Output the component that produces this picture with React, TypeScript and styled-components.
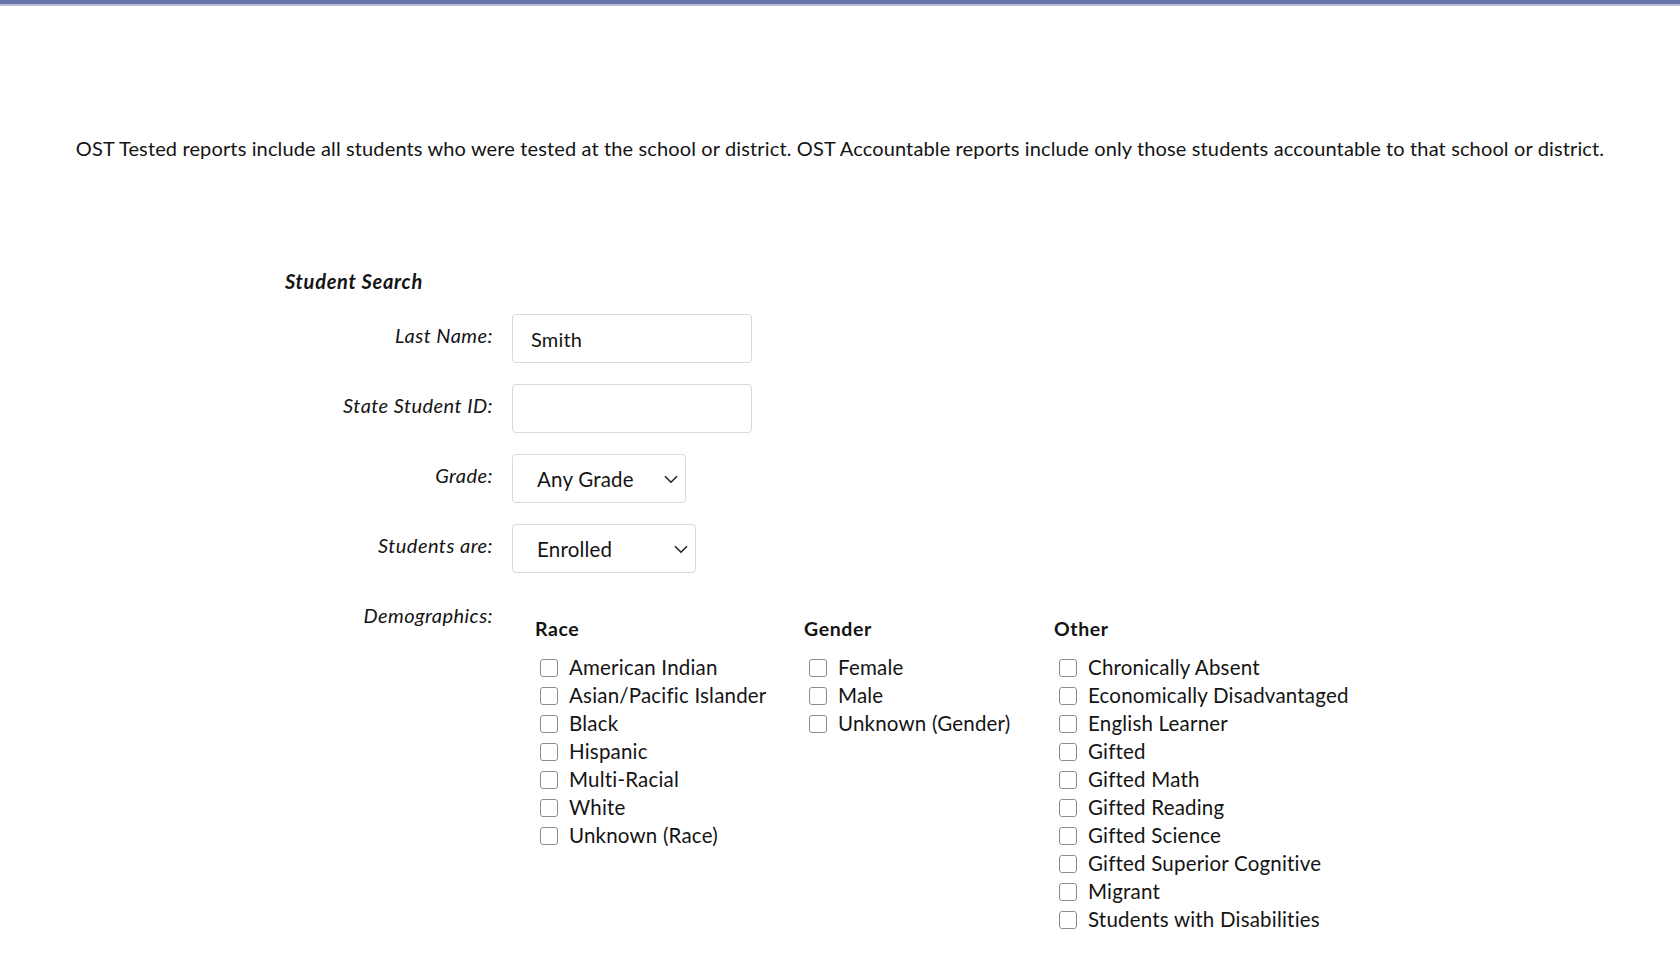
import React from "react";
import styled, { createGlobalStyle } from "styled-components";

const GlobalStyle = createGlobalStyle`
  html, body {
    margin: 0;
    padding: 0;
    background: #ffffff;
    color: #141414;
    font-family: Lato, "Open Sans", sans-serif;
  }
`;

const TopBar = styled.div`
  height: 4px;
  background: #6672a8;
  border-bottom: 2px solid #b7bedd;
`;

const Intro = styled.p`
  margin: 129px 0 0;
  text-align: center;
  font-size: 20px;
  letter-spacing: 0.13px;
  line-height: 26px;
`;

const SearchSection = styled.section`
  margin-top: 108px;
  padding-left: 285px;
`;

const Title = styled.h2`
  margin: 0 0 21px;
  font-size: 20px;
  letter-spacing: 0.7px;
  line-height: 24px;
  font-weight: 700;
  font-style: italic;
`;

const FormGrid = styled.div`
  display: grid;
  grid-template-columns: 208px auto;
  column-gap: 19px;
  row-gap: 21px;
  align-items: start;
`;

const Label = styled.label`
  text-align: right;
  font-style: italic;
  font-size: 20px;
  letter-spacing: 0.45px;
  line-height: 24px;
  padding-top: 9px;
`;

const TextInput = styled.input`
  box-sizing: border-box;
  width: 240px;
  height: 49px;
  border: 1px solid #d9d9d9;
  border-radius: 4px;
  padding: 0 18px;
  font-family: inherit;
  font-size: 20px;
  letter-spacing: 0.2px;
  color: #141414;
  outline: none;
`;

const SelectWrap = styled.div<{ $width: number }>`
  position: relative;
  width: ${(p) => p.$width}px;
  height: 49px;
`;

const Select = styled.select`
  box-sizing: border-box;
  appearance: none;
  width: 100%;
  height: 100%;
  border: 1px solid #d9d9d9;
  border-radius: 4px;
  padding: 0 24px;
  background: #fff;
  font-family: inherit;
  font-size: 20.5px;
  letter-spacing: 0.2px;
  color: #141414;
  outline: none;
`;

const Chevron = styled.svg`
  position: absolute;
  right: 8px;
  top: 21px;
  pointer-events: none;
`;

const Demographics = styled.div`
  display: flex;
  padding-left: 23px;
  padding-top: 24px;
`;

const Group = styled.div<{ $width?: number }>`
  width: ${(p) => (p.$width ? `${p.$width}px` : "auto")};
`;

const GroupTitle = styled.div`
  font-size: 19.5px;
  letter-spacing: 0.6px;
  font-weight: 700;
  line-height: 22px;
  margin-bottom: 13px;
`;

const Option = styled.label`
  display: flex;
  align-items: center;
  gap: 11px;
  height: 28px;
  padding-left: 5px;
  font-size: 20.5px;
  letter-spacing: 0.2px;
`;

const Box = styled.input`
  appearance: none;
  box-sizing: border-box;
  width: 18px;
  height: 18px;
  margin: 2px 0 0;
  border: 1px solid #8c8c8c;
  border-radius: 3px;
  background: #fff;
`;

const race = [
  "American Indian",
  "Asian/Pacific Islander",
  "Black",
  "Hispanic",
  "Multi-Racial",
  "White",
  "Unknown (Race)",
];
const gender = ["Female", "Male", "Unknown (Gender)"];
const other = [
  "Chronically Absent",
  "Economically Disadvantaged",
  "English Learner",
  "Gifted",
  "Gifted Math",
  "Gifted Reading",
  "Gifted Science",
  "Gifted Superior Cognitive",
  "Migrant",
  "Students with Disabilities",
];

const DropDown = ({ width, value }: { width: number; value: string }) => (
  <SelectWrap $width={width}>
    <Select defaultValue={value}>
      <option>{value}</option>
    </Select>
    <Chevron width="14" height="9" viewBox="0 0 14 9">
      <path d="M1 1.2 L7 7.2 L13 1.2" fill="none" stroke="#222" strokeWidth="1.6" />
    </Chevron>
  </SelectWrap>
);

const CheckGroup = ({ title, items, width }: { title: string; items: string[]; width?: number }) => (
  <Group $width={width}>
    <GroupTitle>{title}</GroupTitle>
    {items.map((item) => (
      <Option key={item}>
        <Box type="checkbox" />
        {item}
      </Option>
    ))}
  </Group>
);

const App = () => {
  return (
    <>
      <GlobalStyle />
      <TopBar />
      <Intro>
        OST Tested reports include all students who were tested at the school or district. OST Accountable
        reports include only those students accountable to that school or district.
      </Intro>
      <SearchSection>
        <Title>Student Search</Title>
        <FormGrid>
          <Label>Last Name:</Label>
          <TextInput defaultValue="Smith" />
          <Label>State Student ID:</Label>
          <TextInput />
          <Label>Grade:</Label>
          <DropDown width={174} value="Any Grade" />
          <Label>Students are:</Label>
          <DropDown width={184} value="Enrolled" />
          <Label>Demographics:</Label>
          <Demographics>
            <CheckGroup title="Race" items={race} width={269} />
            <CheckGroup title="Gender" items={gender} width={250} />
            <CheckGroup title="Other" items={other} />
          </Demographics>
        </FormGrid>
      </SearchSection>
    </>
  );
};

export default App;
